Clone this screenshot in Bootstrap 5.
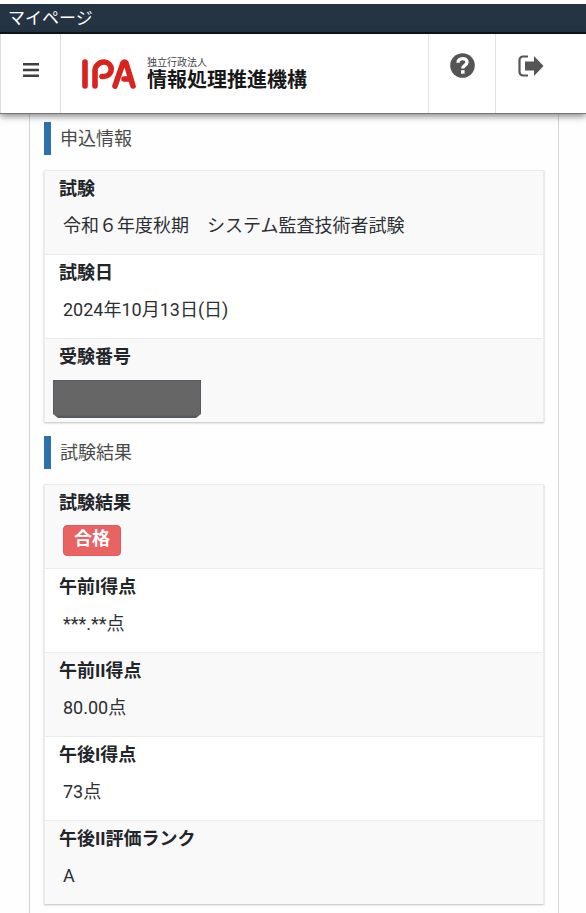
<!DOCTYPE html>
<html lang="ja">
<head>
<meta charset="utf-8">
<meta name="viewport" content="width=device-width, initial-scale=1">
<title>マイページ</title>
<link href="https://cdn.jsdelivr.net/npm/bootstrap@5.3.0/dist/css/bootstrap.min.css" rel="stylesheet">
<style>
body { font-family: Roboto, "Noto Sans CJK JP", sans-serif; font-size: 18px; line-height: 28px; color: #2c2f33; background: #fefefe; }
.title-bar { margin-top: 4px; height: 30px; padding: 0 8px; background: #243443; border-bottom: 2px solid #0c141c; color: #fff; font-size: 17px; line-height: 28px; }
.site-header { height: 80px; background: #fff; border-bottom: 1px solid #777; box-shadow: 0 2px 7px rgba(0,0,0,.5); z-index: 2; }
.header-btn { border: 0; background: none; padding: 0; color: #555; }
.menu-btn { width: 61px; border-left: 1px solid #ddd; border-right: 1px solid #ddd; padding-bottom: 8px; }
.help-btn { width: 68px; border-left: 1px solid #e2e2e2; border-right: 1px solid #e2e2e2; padding-bottom: 16px; }
.exit-btn { width: 90px; padding: 0 20px 16px 0; }
.brand { padding-left: 20px; gap: 9px; color: #181818; text-decoration: none; }
.brand-kind { font-size: 10px; line-height: 13px; color: #444; }
.brand-name { font-size: 20px; line-height: 22px; font-weight: 700; }
.panel { margin: 0 27px 0 29px; padding: 8px 14px 10px 14px; border: 1px solid #d4d4d4; border-width: 0 1px; }
.section-title { border-left: 7px solid #2e70a9; padding-left: 9px; font-size: 18px; line-height: 33px; font-weight: 400; color: #4a4a4a; margin: 0 0 15px; }
.info-list { border: 1px solid #ececec; border-width: 0 1px; box-shadow: 0 1px 2px rgba(0,0,0,.25); margin: 0 0 14px; }
.info-item { height: 84px; padding: 4px 14px 0; background: #fff; border-top: 1px solid #ececec; }
.info-item:nth-child(odd) { background: #f9f9f9; }
.info-item dt { font-weight: 700; color: #212529; }
.info-item dd { margin: 9px 0 0; padding-left: 4px; }
.info-item .pass-row { margin-top: 8px; }
.pass-badge { background: #ea6363; border: 1px solid #e05a5c; border-radius: 4px; font-size: 18px; line-height: 26px; padding: 0 10px 3px; }
.info-item .hidden-row { margin: 9px 0 0 -6px; padding: 0; }
.redaction { width: 148px; height: 38px; background: linear-gradient(#666 0 34px, #3d4048 38px); border: 1px solid #555b66; clip-path: polygon(0 0, 100% 0, 100% 34px, 143px 100%, 5px 100%, 0 34px); }
</style>
</head>
<body>
<div class="title-bar">マイページ</div>
<header class="site-header d-flex position-relative">
  <button type="button" class="header-btn menu-btn d-flex align-items-center justify-content-center" aria-label="メニュー">
    <svg width="16" height="14" viewBox="0 0 16 14" fill="#3f3f3f"><path d="M0 0h16v2.500H0zM0 5.750h16v2.500H0zM0 11.500h16V14H0z"/></svg>
  </button>
  <a href="#" class="brand d-flex align-items-center me-auto">
    <svg width="57" height="32" viewBox="0 0 57 32" fill="none" stroke="#d9231f" stroke-width="5.600" stroke-linecap="round" stroke-linejoin="round" role="img" aria-label="IPA"><path d="M4 4v24M14 28V13a9 9 0 0 1 9-9a7 7 0 0 1 0 14.500h-2M34 28L42 5q1.500-2 3 0L52 28M43 21h5"/></svg>
    <span class="d-flex flex-column">
      <span class="brand-kind">独立行政法人</span>
      <span class="brand-name">情報処理推進機構</span>
    </span>
  </a>
  <button type="button" class="header-btn help-btn d-flex align-items-center justify-content-center" aria-label="ヘルプ">
    <svg width="25" height="25" viewBox="0 0 25 25"><circle cx="12.500" cy="12.500" r="12.300" fill="#555"/><path d="M8 9.700C8 4.300 17 4.300 17 9.300c0 3.200-4.300 3-4.300 6.200" fill="none" stroke="#fff" stroke-width="3.400"/><path d="M11 17.200h3.600v3.500H11z" fill="#fff"/></svg>
  </button>
  <button type="button" class="header-btn exit-btn d-flex align-items-center justify-content-center" aria-label="ログアウト">
    <svg width="26" height="22" viewBox="0 0 26 22"><path d="M10 1.500H5a3.500 3.500 0 0 0-3.500 3.500v12A3.500 3.500 0 0 0 5 20.500h5" fill="none" stroke="#555" stroke-width="2.200"/><path d="M7 6.500h9V1l9.500 10L16 21v-5.500H7z" fill="#555"/></svg>
  </button>
</header>
<main class="panel">
  <h2 class="section-title">申込情報</h2>
  <dl class="info-list">
    <div class="info-item"><dt>試験</dt><dd>令和６年度秋期　システム監査技術者試験</dd></div>
    <div class="info-item"><dt>試験日</dt><dd>2024年10月13日(日)</dd></div>
    <div class="info-item"><dt>受験番号</dt><dd class="hidden-row"><div class="redaction"></div></dd></div>
  </dl>
  <h2 class="section-title">試験結果</h2>
  <dl class="info-list">
    <div class="info-item"><dt>試験結果</dt><dd class="pass-row d-flex"><span class="badge pass-badge">合格</span></dd></div>
    <div class="info-item"><dt>午前I得点</dt><dd>***.**点</dd></div>
    <div class="info-item"><dt>午前II得点</dt><dd>80.00点</dd></div>
    <div class="info-item"><dt>午後I得点</dt><dd>73点</dd></div>
    <div class="info-item"><dt>午後II評価ランク</dt><dd>A</dd></div>
  </dl>
</main>
<script src="https://cdn.jsdelivr.net/npm/bootstrap@5.3.0/dist/js/bootstrap.bundle.min.js"></script>
</body>
</html>
